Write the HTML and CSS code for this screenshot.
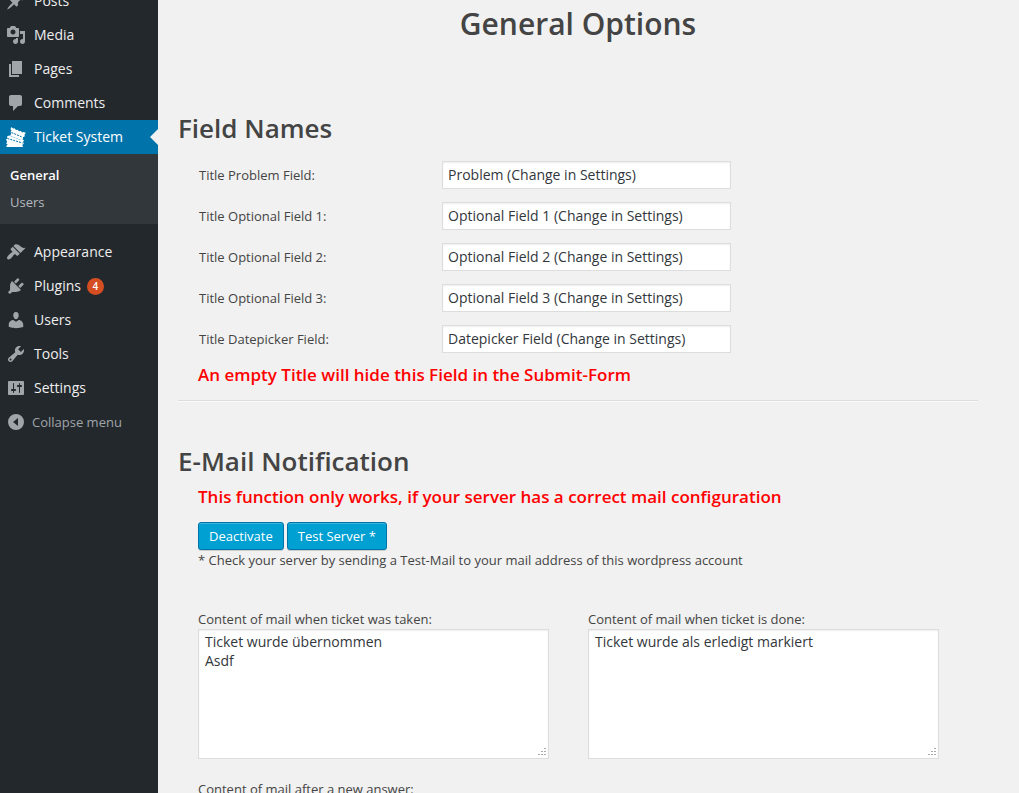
FILE: index.html
```html
<!DOCTYPE html>
<html lang="en">
<head>
<meta charset="utf-8">
<title>General Options</title>
<link rel="stylesheet" href="styles.css">
</head>
<body>
<div class="shell">
  <nav class="sidebar" aria-label="Main menu">
    <ul class="menu">
      <li><a class="item" href="#"><svg class="icon" viewBox="0 0 20 20"><path d="M10.44 3.02l1.82-1.82 6.36 6.35-1.83 1.82c-1.05-.68-2.48-.57-3.41.36l-.75.75c-.92.93-1.04 2.35-.35 3.41l-1.83 1.82-2.41-2.41-2.8 2.79c-.42.42-3.38 2.71-3.8 2.29s1.86-3.39 2.28-3.81l2.79-2.79L4.1 9.36l1.83-1.82c1.05.69 2.48.57 3.4-.36l.75-.75c.93-.92 1.05-2.35.36-3.41z"/></svg>Posts</a></li>
      <li><a class="item" href="#"><svg class="icon" viewBox="0 0 20 20"><path fill-rule="evenodd" d="M13 11V4c0-.55-.45-1-1-1h-1.67L9 1H5L3.67 3H2c-.55 0-1 .45-1 1v7c0 .55.45 1 1 1h10c.55 0 1-.45 1-1zM7 4.5c1.38 0 2.5 1.12 2.5 2.5S8.38 9.5 7 9.5 4.5 8.38 4.5 7 5.62 4.5 7 4.5zM14 6h5v10.5c0 1.38-1.12 2.5-2.5 2.5S14 17.88 14 16.5s1.12-2.5 2.5-2.5c.17 0 .34.02.5.05V9h-3V6zm-4 8.05V13h2v3.5c0 1.38-1.12 2.5-2.5 2.5S7 17.88 7 16.5 8.12 14 9.5 14c.17 0 .34.02.5.05z"/></svg>Media</a></li>
      <li><a class="item" href="#"><svg class="icon" viewBox="0 0 20 20"><path d="M6 15V2h10v13H6zm-1 1h8v2H3V5h2v11z"/></svg>Pages</a></li>
      <li><a class="item" href="#"><svg class="icon" viewBox="0 0 20 20"><path d="M5 2h9c1.1 0 2 .9 2 2v7c0 1.1-.9 2-2 2h-2l-5 5v-5H5c-1.1 0-2-.9-2-2V4c0-1.1.9-2 2-2z"/></svg>Comments</a></li>
      <li>
        <a class="item item-current" href="#" aria-current="page"><svg class="icon" viewBox="0 0 20 20"><path d="M5.500 0l1.500 1.500L8.500 1.200 10 3l1.700-.2L13 4.300l2-.3 1 1.500 1.500-.5 2.300.8-1.300 2 .3 1.500-1.800 1-.2 2.200-1.300.8L4 8.800l1.300-2.300L4.500 5l1-1.200L4.500 2z"/><path d="M3 8.500l11.500 4.500 1.500-.5 2 .5-1 2 .8 1.500-1.500 1.500.7 2H.5v-1.500l1.200-.8-1.500-1.500 1-1.500L0 12.500l1.500-1L1 9.500z"/><path class="icon-cut icon-cut-dashed" d="M5.500 5.500l10.500 4.500M1.500 11.500l15 4.500"/></svg>Ticket System</a>
        <ul class="submenu">
          <li><a class="subitem subitem-current" href="#">General</a></li>
          <li><a class="subitem" href="#">Users</a></li>
        </ul>
      </li>
      <li class="group-start"><a class="item" href="#"><svg class="icon" viewBox="0 0 20 20"><path d="M14.48 11.06L7.41 3.99l1.5-1.5c.5-.56 2.3-.47 3.51.32 1.21.8 1.43 1.28 2.91 2.1 1.18.64 2.45 1.26 4.45.85zm-.71.71L6.7 4.7 4.93 6.47c-.39.39-.39 1.02 0 1.41l1.06 1.06c.39.39.39 1.03 0 1.42-.6.6-1.43 1.11-2.21 1.69-.35.26-.7.53-1.01.84C1.43 14.23.4 16.08 1.4 17.07c.99 1 2.84-.03 4.18-1.36.31-.31.58-.66.85-1.02.57-.78 1.08-1.61 1.69-2.21.39-.39 1.02-.39 1.41 0l1.06 1.06c.39.39 1.02.39 1.41 0z"/></svg>Appearance</a></li>
      <li><a class="item" href="#"><svg class="icon" viewBox="0 0 20 20"><path d="M13.11 4.36L9.87 7.6 8 5.73l3.24-3.24c.35-.34 1.05-.2 1.56.32.52.51.66 1.21.31 1.55zm-8 1.77l.91-1.12 9.01 9.01-1.19.84c-.71.71-2.63 1.16-3.82 1.16H6.14L4.9 17.26c-.59.59-1.54.59-2.12 0-.59-.58-.59-1.53 0-2.12l1.24-1.24v-3.88c0-1.13.4-3.19 1.09-3.89zm7.26 3.97l3.24-3.24c.34-.35 1.04-.21 1.55.31.52.51.66 1.21.31 1.55l-3.24 3.25z"/></svg>Plugins<span class="count">4</span></a></li>
      <li><a class="item" href="#"><svg class="icon" viewBox="0 0 20 20"><path d="M10 9.25c-2.27 0-2.73-3.44-2.73-3.44C7 4.02 7.82 2 9.97 2c2.16 0 2.98 2.02 2.71 3.81 0 0-.41 3.44-2.68 3.44zm0 2.57L12.720 10c2.39 0 4.52 2.33 4.52 4.53v2.49s-3.65 1.13-7.24 1.13c-3.65 0-7.24-1.13-7.24-1.13v-2.49c0-2.25 1.94-4.48 4.47-4.48z"/></svg>Users</a></li>
      <li><a class="item" href="#"><svg class="icon" viewBox="0 0 20 20"><path fill-rule="evenodd" d="M16.68 9.77c-1.34 1.34-3.3 1.67-4.95.99l-5.41 6.52c-.99.99-2.59.99-3.58 0s-.99-2.59 0-3.57l6.52-5.42c-.68-1.65-.35-3.61.99-4.95 1.28-1.28 3.12-1.62 4.72-1.06l-2.89 2.89 2.82 2.82 2.86-2.87c.53 1.58.18 3.39-1.08 4.65zM3.81 16.21c.4.39 1.04.39 1.43 0 .4-.4.4-1.04 0-1.43-.39-.4-1.03-.4-1.43 0-.39.39-.39 1.03 0 1.43z"/></svg>Tools</a></li>
      <li><a class="item" href="#"><svg class="icon" viewBox="0 0 20 20"><path fill-rule="evenodd" d="M18 16V4c0-.55-.45-1-1-1H3c-.55 0-1 .45-1 1v12c0 .55.45 1 1 1h14c.55 0 1-.45 1-1zM8 11h1c.55 0 1 .45 1 1s-.45 1-1 1H8v1.5c0 .28-.22.5-.5.5s-.5-.22-.5-.5V13H6c-.55 0-1-.45-1-1s.45-1 1-1h1V5.500c0-.28.22-.5.5-.5s.5.22.5.5V11zm5-2h-1c-.55 0-1-.45-1-1s.45-1 1-1h1V5.500c0-.28.22-.5.5-.5s.5.22.5.5V7h1c.55 0 1 .45 1 1s-.45 1-1 1h-1v5.5c0 .28-.22.5-.5.5s-.5-.22-.5-.5V9z"/></svg>Settings</a></li>
      <li><button class="collapse" type="button"><svg class="icon" viewBox="0 0 20 20"><path fill-rule="evenodd" d="M10 2a8 8 0 1 0 0 16 8 8 0 0 0 0-16zm2 4v8l-5-4z"/></svg>Collapse menu</button></li>
    </ul>
  </nav>

  <main class="content">
    <h1 class="title">General Options</h1>

    <section class="section">
      <h2 class="heading">Field Names</h2>
      <div class="fields">
        <label for="f-problem">Title Problem Field:</label>
        <input class="control" id="f-problem" type="text" value="Problem (Change in Settings)">
        <label for="f-opt1">Title Optional Field 1:</label>
        <input class="control" id="f-opt1" type="text" value="Optional Field 1 (Change in Settings)">
        <label for="f-opt2">Title Optional Field 2:</label>
        <input class="control" id="f-opt2" type="text" value="Optional Field 2 (Change in Settings)">
        <label for="f-opt3">Title Optional Field 3:</label>
        <input class="control" id="f-opt3" type="text" value="Optional Field 3 (Change in Settings)">
        <label for="f-date">Title Datepicker Field:</label>
        <input class="control" id="f-date" type="text" value="Datepicker Field (Change in Settings)">
      </div>
      <p class="warning">An empty Title will hide this Field in the Submit-Form</p>
    </section>

    <hr class="divider">

    <section class="section">
      <h2 class="heading">E-Mail Notification</h2>
      <p class="warning">This function only works, if your server has a correct mail configuration</p>
      <div class="actions">
        <button class="button" type="button">Deactivate</button>
        <button class="button" type="button">Test Server *</button>
      </div>
      <p class="note">* Check your server by sending a Test-Mail to your mail address of this wordpress account</p>
      <div class="mails">
        <div class="mail">
          <label for="m-taken">Content of mail when ticket was taken:</label>
          <textarea class="control area" id="m-taken">Ticket wurde übernommen
Asdf</textarea>
        </div>
        <div class="mail">
          <label for="m-done">Content of mail when ticket is done:</label>
          <textarea class="control area" id="m-done">Ticket wurde als erledigt markiert</textarea>
        </div>
        <div class="mail">
          <label for="m-answer">Content of mail after a new answer:</label>
          <textarea class="control area" id="m-answer"></textarea>
        </div>
      </div>
    </section>
  </main>
</div>
</body>
</html>
```

FILE: styles.css
```css
* {
  box-sizing: border-box;
}

html,
body {
  height: 100%;
}

body {
  margin: 0;
  overflow: hidden;
  background: #f1f1f1;
  color: #444;
  font: 13px/18px "Open Sans", sans-serif;
}

/* The view is scrolled partway into the first menu row. */
.shell {
  display: flex;
  align-items: stretch;
  min-height: 100%;
  margin-top: -16px;
}

.sidebar {
  flex: 0 0 158px;
  background: #23282d;
}

.menu,
.submenu {
  margin: 0;
  padding: 0;
  list-style: none;
}

.item,
.collapse {
  display: flex;
  align-items: center;
  height: 34px;
  padding: 0 6px;
  color: #eee;
  font-size: 14px;
  text-decoration: none;
}

.icon {
  width: 20px;
  height: 20px;
  margin-right: 8px;
  fill: #a0a5aa;
}

.item-current {
  position: relative;
  background: #0073aa;
  color: #fff;
}

.item-current .icon {
  fill: #fff;
}

.icon-cut {
  fill: none;
  stroke: #0073aa;
  stroke-width: 1;
}

.icon-cut-dashed {
  stroke-dasharray: 2 1;
}

.item-current::after {
  content: "";
  position: absolute;
  top: 9px;
  right: 0;
  border: 8px solid transparent;
  border-right-color: #f1f1f1;
  border-left-width: 0;
}

.submenu {
  padding: 7px 0 9px;
  background: #32373c;
}

.subitem {
  display: flex;
  align-items: center;
  height: 27px;
  padding: 0 10px;
  color: #b4b9be;
  text-decoration: none;
}

.subitem-current {
  color: #fff;
  font-weight: 600;
}

.group-start {
  margin-top: 11px;
}

.count {
  min-width: 17px;
  margin-left: 6px;
  border-radius: 9px;
  background: #d54e21;
  color: #fff;
  font-size: 10px;
  font-weight: 600;
  line-height: 17px;
  text-align: center;
}

.collapse {
  width: 100%;
  border: 0;
  background: none;
  color: #a0a5aa;
  font-family: inherit;
  font-size: 13px;
}

.collapse .icon {
  margin-right: 6px;
}

.content {
  flex: 1;
  min-width: 0;
  padding: 20px 41px 0 20px;
}

.title {
  margin: 0 0 66px;
  font-size: 30px;
  font-weight: 600;
  line-height: 40px;
  text-align: center;
}

.section {
  padding: 0 39px 0 20px;
}

.heading {
  margin: 0 0 0 -20px;
  font-size: 26px;
  font-weight: 600;
  line-height: 36px;
}

.fields {
  display: grid;
  grid-template-columns: 243px minmax(0, 289px);
  row-gap: 13px;
  align-items: center;
  margin: 15px 0 11px;
  padding-left: 1px;
}

.control {
  width: 100%;
  margin: 0;
  border: 1px solid #ddd;
  border-radius: 0;
  background: #fff;
  box-shadow: inset 0 1px 2px rgba(0, 0, 0, 0.07);
  color: #32373c;
  font: 14px/19px "Open Sans", sans-serif;
}

input.control {
  height: 28px;
  padding: 2px 5px 4px;
}

.warning {
  margin: 7px 0 14px;
  color: #f00;
  font-size: 17px;
  font-weight: 600;
  line-height: 22px;
}

.divider {
  height: 2px;
  margin: 14px 0 41px;
  border: 0;
  border-top: 1px solid #ddd;
  border-bottom: 1px solid #fafafa;
}

.actions {
  display: flex;
  gap: 3px;
}

.button {
  height: 28px;
  padding: 0 10px;
  border: 1px solid #0073aa;
  border-radius: 3px;
  background: #00a0d2;
  box-shadow: inset 0 1px 0 rgba(120, 200, 230, 0.5), 0 1px 0 rgba(0, 0, 0, 0.15);
  color: #fff;
  font: 13px/26px "Open Sans", sans-serif;
}

.note {
  margin: 1px 0 0;
}

.mails {
  display: grid;
  grid-template-columns: 1fr 1fr;
  gap: 21px 39px;
  margin-top: 41px;
}

.mail {
  display: grid;
  gap: 1px;
}

.area {
  display: block;
  height: 130px;
  padding: 2px 6px;
  resize: both;
}

/* Dotted triangular grip */
.area::-webkit-resizer {
  background:
    linear-gradient(#aaa, #aaa) 11px 5px / 2px 1px no-repeat,
    linear-gradient(#aaa, #aaa) 8px 8px / 2px 1px no-repeat,
    linear-gradient(#aaa, #aaa) 11px 8px / 2px 1px no-repeat,
    linear-gradient(#aaa, #aaa) 5px 11px / 2px 1px no-repeat,
    linear-gradient(#aaa, #aaa) 8px 11px / 2px 1px no-repeat,
    linear-gradient(#aaa, #aaa) 11px 11px / 2px 1px no-repeat;
}
```
